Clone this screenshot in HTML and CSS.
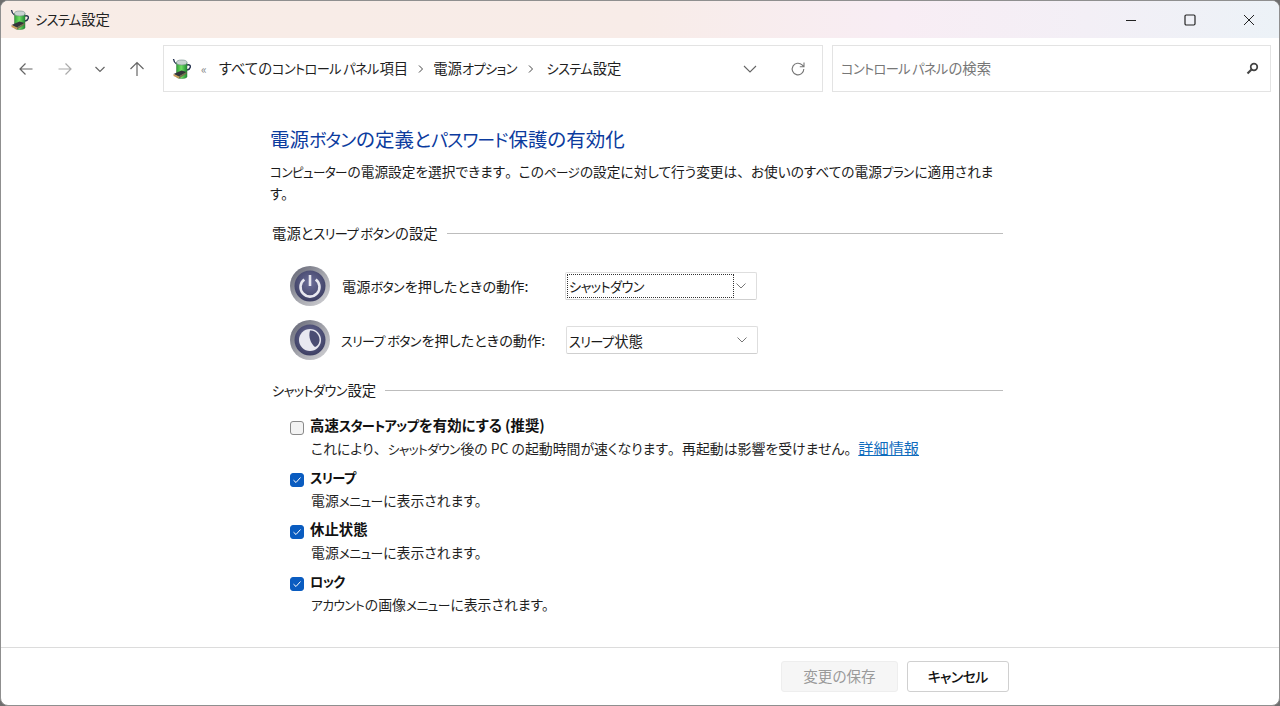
FILE: index.html
```html
<!DOCTYPE html>
<html lang="ja">
<head>
<meta charset="utf-8">
<title>システム設定</title>
<link rel="stylesheet" href="styles.css">
</head>
<body>
<svg class="defs" width="0" height="0" aria-hidden="true">
  <defs>
    <linearGradient id="bat" x1="0" x2="1" y1="0" y2="0">
      <stop offset="0" stop-color="#2f9e3a"/><stop offset=".45" stop-color="#6fe060"/><stop offset="1" stop-color="#1f8a35"/>
    </linearGradient>
    <radialGradient id="disc" cx=".5" cy=".4" r=".6">
      <stop offset="0" stop-color="#6d6f9a"/><stop offset="1" stop-color="#3d3f63"/>
    </radialGradient>
    <linearGradient id="rim" x1="0" x2="1" y1="0" y2="1">
      <stop offset="0" stop-color="#5e6070"/><stop offset=".55" stop-color="#a8a9b0"/><stop offset="1" stop-color="#d5d5d8"/>
    </linearGradient>
    <symbol id="power-app" viewBox="0 0 20 22">
      <path d="M1.500 1c.3 2.500 1.300 4 3 5M15 7c2.300-.8 3.800.4 3.300 2.200-.4 1.500-1.500 2.400-3.300 2.800" fill="none" stroke="#26324f" stroke-width="1.400"/>
      <path d="M4.500 4.500h10.500v14.500c-1.500 2-9 2-10.500 0z" fill="url(#bat)" stroke="#3a7d3f" stroke-width=".5"/>
      <ellipse cx="9.750" cy="4.500" rx="5.250" ry="2.500" fill="#c9d3d2" stroke="#6e8a84" stroke-width=".6"/>
      <path d="M1.500 16l8-3.500 5 1.500-7.500 4.500z" fill="#34343a"/>
      <path d="M1.500 16l5.500 2.500v2l-5.500-2.500z" fill="#c99a5b"/>
      <path d="M7 18.500l7.500-4.500v1.500l-7.500 5z" fill="#7a6a4d"/>
    </symbol>
    <symbol id="disc-base" viewBox="0 0 40 40">
      <circle cx="20" cy="20" r="20" fill="url(#rim)"/>
      <circle cx="20" cy="20" r="15.500" fill="url(#disc)"/>
    </symbol>
  </defs>
</svg>
<div class="window">
  <header class="titlebar">
    <svg class="app-icon" width="20" height="22"><use href="#power-app"/></svg>
    <span class="title"><span class="k">システム</span>設定</span>
    <div class="controls">
      <svg width="12" height="12" viewBox="0 0 12 12"><path d="M1 6.500h10" stroke="#222" fill="none"/></svg>
      <svg width="12" height="12" viewBox="0 0 12 12"><rect x="1" y="1" width="10" height="10" rx="1.200" fill="none" stroke="#222" stroke-width="1.200"/></svg>
      <svg width="12" height="12" viewBox="0 0 12 12"><path d="M1 1l10 10M11 1L1 11" stroke="#222" fill="none"/></svg>
    </div>
  </header>

  <nav class="navbar">
    <div class="nav-buttons">
      <svg class="nav-back" width="16" height="16" viewBox="0 0 16 16"><path d="M14.500 8H2M7.500 2.500L2 8l5.500 5.500" fill="none" stroke="#666" stroke-width="1.200"/></svg>
      <svg class="nav-forward" width="16" height="16" viewBox="0 0 16 16"><path d="M1.500 8H14M8.500 2.500L14 8l-5.500 5.500" fill="none" stroke="#aaa" stroke-width="1.200"/></svg>
      <svg class="nav-recent" width="10" height="10" viewBox="0 0 10 10"><path d="M.5 3l4.500 4.500L9.500 3" fill="none" stroke="#666" stroke-width="1.200"/></svg>
      <svg class="nav-up" width="16" height="16" viewBox="0 0 16 16"><path d="M8 15V1.500M1.500 8L8 1.500 14.500 8" fill="none" stroke="#666" stroke-width="1.200"/></svg>
    </div>
    <div class="address">
      <svg class="addr-icon" width="20" height="22"><use href="#power-app"/></svg>
      <span class="crumb-more">«</span>
      <span class="crumb">すべての<span class="k">コントロール パネル</span>項目</span>
      <svg class="sep" width="6" height="8" viewBox="0 0 6 8"><path d="M1 .5L4.500 4 1 7.500" fill="none" stroke="#444"/></svg>
      <span class="crumb">電源<span class="k">オプション</span></span>
      <svg class="sep" width="6" height="8" viewBox="0 0 6 8"><path d="M1 .5L4.500 4 1 7.500" fill="none" stroke="#444"/></svg>
      <span class="crumb"><span class="k">システム</span>設定</span>
      <svg class="addr-chevron" width="14" height="8" viewBox="0 0 14 8"><path d="M1 1l6 6 6-6" fill="none" stroke="#666" stroke-width="1.100"/></svg>
      <svg class="addr-refresh" width="16" height="16" viewBox="0 0 16 16"><path d="M13.800 8a5.800 5.800 0 1 1-1.700-4.100L14 5.800M14 1.500v4.300H9.800" fill="none" stroke="#777" stroke-width="1.100"/></svg>
    </div>
    <div class="search">
      <span class="search-text"><span class="k">コントロール パネル</span>の検索</span>
      <svg width="13" height="13" viewBox="0 0 13 13"><circle cx="8" cy="5" r="3.300" fill="none" stroke="#444" stroke-width="1.700"/><path d="M5.500 7.500L1.500 11.500" stroke="#444" stroke-width="2.200"/></svg>
    </div>
  </nav>

  <main class="content">
    <h1 class="heading">電源<span class="k">ボタン</span>の定義と<span class="k">パスワード</span>保護の有効化</h1>
    <p class="intro"><span class="k">コンピューター</span>の電源設定を選択できます<span class="pn">。</span>この<span class="k">ページ</span>の設定に対して行う変更は<span class="pn">、</span>お使いのすべての電源<span class="k">プラン</span>に適用されま<br>す。</p>

    <div class="section-head first"><span>電源と<span class="k">スリープ ボタン</span>の設定</span><i></i></div>
    <div class="power-row">
      <svg class="disc" width="40" height="40" viewBox="0 0 40 40">
        <use href="#disc-base"/>
        <path d="M14.300 13.500a9.500 9.500 0 1 0 11.400 0" fill="none" stroke="#e8e8f0" stroke-width="2.600"/>
        <path d="M20 9v11" stroke="#e8e8f0" stroke-width="2.600"/>
      </svg>
      <span class="power-label">電源<span class="k">ボタン</span>を押したときの動作:</span>
      <div class="select focused"><span class="select-value"><span class="k">シャットダウン</span></span>
        <svg width="10" height="6" viewBox="0 0 10 6"><path d="M.5 .5L5 5 9.500 .5" fill="none" stroke="#777"/></svg></div>
    </div>
    <div class="power-row second">
      <svg class="disc" width="40" height="40" viewBox="0 0 40 40">
        <use href="#disc-base"/>
        <circle cx="20" cy="20" r="11" fill="#e8e8f0"/>
        <path d="M20 10.500C26 10 30 16 29.500 21 29 24 27 26.500 25 27 21 24 18 17 20 10.500z" fill="#4a4c72"/>
      </svg>
      <span class="power-label"><span class="k">スリープ ボタン</span>を押したときの動作:</span>
      <div class="select"><span class="select-value"><span class="k">スリープ</span>状態</span>
        <svg width="10" height="6" viewBox="0 0 10 6"><path d="M.5 .5L5 5 9.500 .5" fill="none" stroke="#777"/></svg></div>
    </div>

    <div class="section-head second"><span><span class="k">シャットダウン</span>設定</span><i></i></div>
    <div class="options">
      <div class="option">
        <span class="box"></span>
        <div><div class="opt-title">高速<span class="k">スタートアップ</span>を有効にする (推奨)</div>
        <div class="opt-desc">これにより<span class="pn">、</span><span class="k">シャットダウン</span>後の PC の起動時間が速くなります<span class="pn">。</span>再起動は影響を受けません<span class="pn">。</span><a class="link">詳細情報</a></div></div>
      </div>
      <div class="option">
        <span class="box on"><svg width="10" height="10" viewBox="0 0 10 10"><path d="M1.500 5.200L4 7.500 8.500 2.500" fill="none" stroke="#fff"/></svg></span>
        <div><div class="opt-title"><span class="k">スリープ</span></div><div class="opt-desc">電源<span class="k">メニュー</span>に表示されます。</div></div>
      </div>
      <div class="option">
        <span class="box on"><svg width="10" height="10" viewBox="0 0 10 10"><path d="M1.500 5.200L4 7.500 8.500 2.500" fill="none" stroke="#fff"/></svg></span>
        <div><div class="opt-title">休止状態</div><div class="opt-desc">電源<span class="k">メニュー</span>に表示されます。</div></div>
      </div>
      <div class="option">
        <span class="box on"><svg width="10" height="10" viewBox="0 0 10 10"><path d="M1.500 5.200L4 7.500 8.500 2.500" fill="none" stroke="#fff"/></svg></span>
        <div><div class="opt-title"><span class="k">ロック</span></div><div class="opt-desc"><span class="k">アカウント</span>の画像<span class="k">メニュー</span>に表示されます。</div></div>
      </div>
    </div>
  </main>

  <footer class="footer">
    <button class="btn save" disabled>変更の保存</button>
    <button class="btn cancel"><span class="k">キャンセル</span></button>
  </footer>
</div>
</body>
</html>
```
FILE: styles.css
```css
* { box-sizing: border-box; }
html, body { margin: 0; height: 100%; background: #6e6e6e; overflow: hidden; }
body {
  font-family: "Noto Sans CJK JP", "Noto Sans", sans-serif;
  font-size: 14.4px;
  color: #1a1a1a;
  font-feature-settings: "palt";
}
.k { font-size: .92em; letter-spacing: -.05em; margin-right: .05em; line-height: 1; }
.pn { font-feature-settings: normal; line-height: 1; }
.defs { position: absolute; }
.window {
  height: 706px;
  display: flex;
  flex-direction: column;
  background: #fff;
  border: 1px solid #8f8f8f;
  border-radius: 8px;
  overflow: hidden;
}
.titlebar {
  height: 37px;
  flex: none;
  display: flex;
  align-items: center;
  padding-left: 9px;
  background: linear-gradient(90deg, #f8ece6 0%, #f8ece8 50%, #f8edf4 70%, #f3eff6 85%, #ecf2f7 100%);
}
.app-icon { flex: none; }
.title { margin: 0 0 2px 5px; color: #222; }
.controls { margin-left: auto; display: flex; gap: 47px; padding-right: 24px; }
.navbar {
  height: 62px;
  flex: none;
  display: flex;
  align-items: flex-start;
  padding: 7px 8px 0 0;
}
.nav-buttons {
  width: 162px;
  height: 47px;
  flex: none;
  display: flex;
  align-items: center;
  padding-left: 17px;
}
.nav-forward { margin-left: 23px; }
.nav-recent { margin-left: 22px; }
.nav-up { margin-left: 24px; }
.address, .search {
  height: 47px;
  background: #fff;
  border: 1px solid #e3e3e3;
  display: flex;
  align-items: center;
}
.address { width: 660px; flex: none; padding-left: 8px; }
.addr-icon { flex: none; }
.crumb-more { margin-left: 9px; font-size: 12px; color: #888; }
.crumb { margin: 0 0 2px 12px; color: #1f1f1f; }
.sep { margin-left: 10px; flex: none; }
.sep + .crumb { margin-left: 9px; }
.sep ~ .sep + .crumb { margin-left: 13px; }
.addr-chevron { margin-left: auto; flex: none; }
.addr-refresh { margin: 0 16px 0 33px; flex: none; }
.search { flex: 1; margin-left: 9px; padding: 0 11px 0 8px; justify-content: space-between; }
.search-text { margin-bottom: 2px; color: #777; }
.content { flex: 1; padding-left: 269px; min-height: 0; }
.heading {
  margin: 25px 0 0;
  font-size: 19.5px;
  font-weight: 400;
  line-height: 28px;
  color: #0b3b9e;
}
.intro { margin: 7px 0 0; width: 733px; font-size: 13.7px; line-height: 22px; color: #1a1a1a; }
.section-head {
  width: 733px;
  display: flex;
  align-items: center;
  gap: 9px;
  height: 22px;
  padding-left: 2px;
}
.section-head > span { margin-bottom: 2px; }
.section-head i { flex: 1; height: 1px; background: #bdbdbd; }
.section-head.first { margin-top: 18px; }
.section-head.second { margin-top: 19px; }
.power-row {
  display: flex;
  align-items: center;
  height: 40px;
  margin-top: 22px;
  padding-left: 20px;
}
.power-row.second { margin-top: 14px; }
.disc { flex: none; }
.power-label { width: 223px; margin-left: 12px; font-size: 14.2px; }
.power-row.second .power-label { margin-left: 11px; width: 225px; }
.select {
  width: 192px;
  height: 28px;
  border: 1px solid #dedede;
  border-bottom-color: #cfcfcf;
  border-radius: 2px;
  display: flex;
  align-items: center;
  justify-content: space-between;
  padding: 0 10px 0 2px;
}
.select.focused .select-value {
  width: 167px;
  height: 24px;
  line-height: 22px;
  border: 1px dotted #333;
  margin-left: -1px;
  padding-left: 1px;
}
.options { margin-top: 14px; padding-left: 20px; }
.option { display: flex; gap: 6px; height: 52px; }
.box {
  flex: none;
  width: 14px;
  height: 14px;
  margin-top: 6px;
  border: 1px solid #8a8a8a;
  border-radius: 3px;
  background: #f3f3f3;
  display: flex;
  align-items: center;
  justify-content: center;
}
.box.on { background: #0a5cc0; border-color: #0a5cc0; }
.opt-title { font-size: 14.4px; font-weight: 700; line-height: 24px; color: #111; margin-top: -2px; }
.opt-desc { padding-left: 1px; font-size: 13.9px; line-height: 23px; color: #1f1f1f; }
.link { font-size: 15.2px; line-height: 1; color: #0f6cbd; text-decoration: underline; }
.footer {
  height: 58px;
  flex: none;
  border-top: 1px solid #dcdcdc;
  display: flex;
  justify-content: flex-end;
  gap: 9px;
  padding: 13px 270px 0 0;
}
.btn {
  height: 31px;
  border-radius: 3px;
  font-family: inherit;
  font-size: 14.6px;
  font-feature-settings: inherit;
  padding: 0 0 2px;
}
.save { width: 117px; background: #f6f6f6; border: 1px solid #eeeeee; color: #9a9a9a; }
.cancel { width: 102px; background: #fff; border: 1px solid #d0d0d0; color: #111; font-weight: 500; }
.cancel .k { font-size: .96em; }
```
